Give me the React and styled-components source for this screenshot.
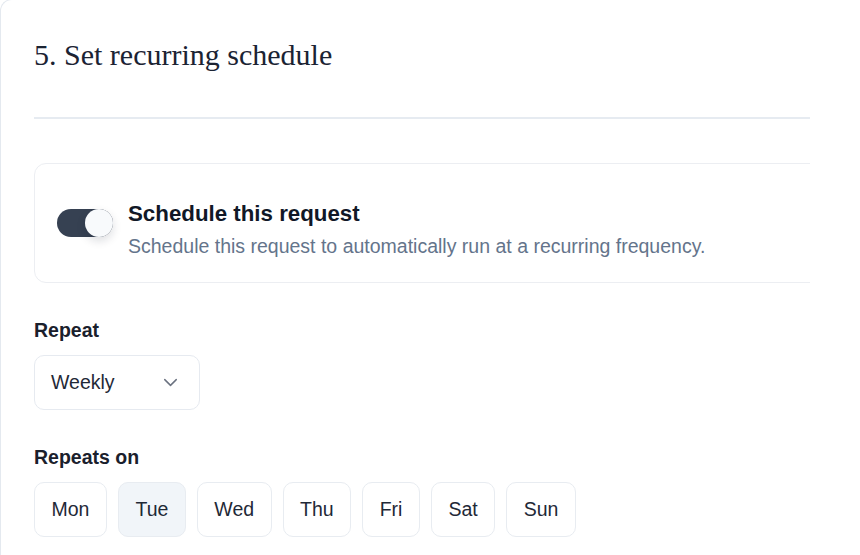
import { useState } from 'react'
import styled, { createGlobalStyle } from 'styled-components'
import { ChevronDown } from 'lucide-react'



const days = ['Mon', 'Tue', 'Wed', 'Thu', 'Fri', 'Sat', 'Sun']

const App = () => {

  const [ enabled, setEnabled ] = useState(true)
  const [ selectedDay, setSelectedDay ] = useState('Tue')

  return (
    <Page>
      <GlobalStyle />

      <Panel>
        <Content>

          <Title>5. Set recurring schedule</Title>

          <Divider />

          <ScheduleCard>
            <Switch
              type = "button"
              role = "switch"
              aria-checked = { enabled }
              $on = { enabled }
              onClick = { () => setEnabled(!enabled) }
            >
              <Knob $on = { enabled } />
            </Switch>

            <CardText>
              <CardHeading>Schedule this request</CardHeading>
              <CardDescription>
                Schedule this request to automatically run at a recurring frequency.
              </CardDescription>
            </CardText>
          </ScheduleCard>

          <Field>
            <Label>Repeat</Label>
            <Select type = "button">
              <span>Weekly</span>
              <ChevronDown size = { 23 } strokeWidth = { 1.5 } color = "#6b7280" />
            </Select>
          </Field>

          <Field>
            <Label>Repeats on</Label>
            <DayRow>
              {
                days.map(day => (
                  <DayButton
                    key = { day }
                    type = "button"
                    $active = { day === selectedDay }
                    onClick = { () => setSelectedDay(day) }
                  >
                    { day }
                  </DayButton>
                ))
              }
            </DayRow>
          </Field>

        </Content>
      </Panel>
    </Page>
  )

}


const GlobalStyle = createGlobalStyle`
  body {
    margin: 0;
    background: #ffffff;
    font-family: "Liberation Sans", Arial, sans-serif;
  }
`

const Page = styled.div`
  min-height: 100vh;
  background: #ffffff;
  overflow: hidden;
`

const Panel = styled.section`
  margin-top: -1px;
  padding: 36px 0 0 33px;
  border-top: 1px solid #e4e9ef;
  border-left: 1px solid #e4e9ef;
  border-top-left-radius: 12px;
`

const Content = styled.div`
  width: 776px;
  overflow: hidden;
  padding-bottom: 40px;
`

const Title = styled.h2`
  margin: 0;
  font-family: "Liberation Serif", "Times New Roman", serif;
  font-size: 30px;
  font-weight: 400;
  line-height: 37px;
  color: #1b2333;
`

const Divider = styled.hr`
  margin: 44px 0;
  height: 2px;
  border: none;
  background: #e6ebf1;
`

const ScheduleCard = styled.div`
  width: 820px;
  display: flex;
  align-items: flex-start;
  gap: 15px;
  padding: 36px 22px 22px;
  border: 1px solid #eceef2;
  border-radius: 12px;
`

const Switch = styled.button`
  position: relative;
  flex: none;
  width: 56px;
  height: 28px;
  margin-top: 9px;
  padding: 0;
  border: none;
  border-radius: 14px;
  background: ${ p => (p.$on ? '#364152' : '#d1d5db') };
  cursor: pointer;
`

const Knob = styled.span`
  position: absolute;
  top: 0;
  left: ${ p => (p.$on ? '28px' : '0') };
  width: 28px;
  height: 28px;
  border-radius: 50%;
  background: #f8fafc;
  box-shadow: 0 4px 10px rgba(15, 23, 42, 0.14);
`

const CardText = styled.div`
  display: flex;
  flex-direction: column;
  gap: 4px;
`

const CardHeading = styled.span`
  font-size: 22.3px;
  font-weight: 700;
  line-height: 28px;
  color: #111827;
`

const CardDescription = styled.span`
  font-size: 19.5px;
  line-height: 28px;
  color: #64748b;
`

const Field = styled.div`
  margin-top: 34px;
`

const Label = styled.div`
  margin-bottom: 12px;
  font-size: 19.5px;
  font-weight: 700;
  line-height: 26px;
  color: #1a202c;
`

const Select = styled.button`
  box-sizing: border-box;
  width: 166px;
  height: 55px;
  display: flex;
  align-items: center;
  justify-content: space-between;
  padding: 0 17px 0 16px;
  border: 1px solid #e6eaf0;
  border-radius: 10px;
  background: #ffffff;
  font-family: inherit;
  font-size: 19.5px;
  color: #1f2937;
  cursor: pointer;
`

const DayRow = styled.div`
  display: flex;
  gap: 11px;
`

const DayButton = styled.button`
  box-sizing: border-box;
  height: 55px;
  padding: 0 16.5px;
  border: 1px solid #e8ecf1;
  border-radius: 10px;
  background: ${ p => (p.$active ? '#f1f5f9' : '#ffffff') };
  font-family: inherit;
  font-size: 19.5px;
  color: #1f2937;
  cursor: pointer;
`

export default App
